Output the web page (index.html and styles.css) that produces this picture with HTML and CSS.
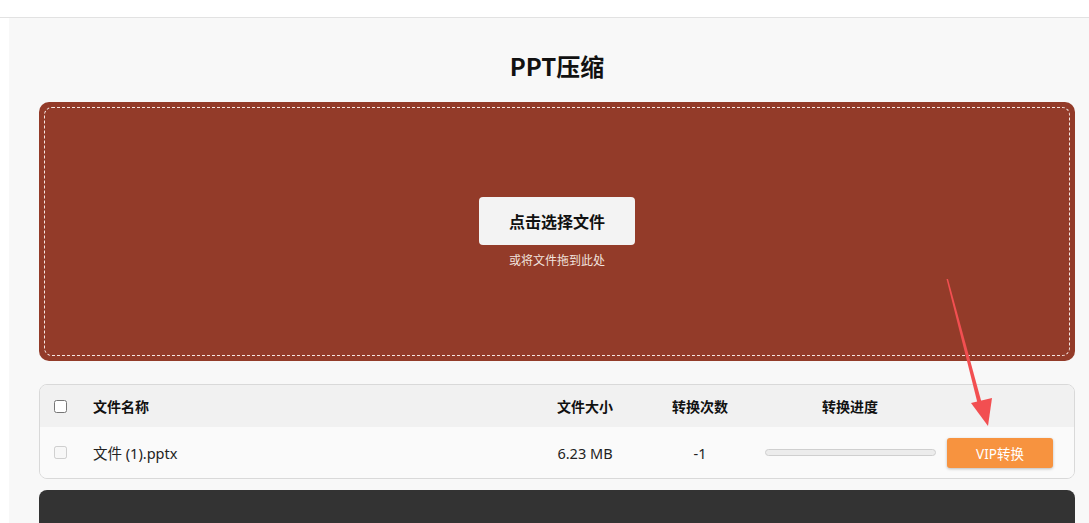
FILE: index.html
```html
<!DOCTYPE html>
<html lang="zh-CN">
<head>
<meta charset="utf-8">
<title>PPT压缩</title>
<link rel="stylesheet" href="styles.css">
</head>
<body>
<div class="topbar"></div>
<main class="page">
  <h1 class="title">PPT压缩</h1>
  <section class="dropzone">
    <div class="dropzone-inner">
      <button class="pick-btn">点击选择文件</button>
      <p class="hint">或将文件拖到此处</p>
    </div>
  </section>
  <section class="table">
    <div class="row head">
      <div class="cell check"><input type="checkbox"></div>
      <div class="cell name">文件名称</div>
      <div class="cell center">文件大小</div>
      <div class="cell center">转换次数</div>
      <div class="cell center">转换进度</div>
      <div class="cell"></div>
    </div>
    <div class="row body">
      <div class="cell check"><input type="checkbox" disabled></div>
      <div class="cell name">文件 (1).pptx</div>
      <div class="cell center">6.23 MB</div>
      <div class="cell center">-1</div>
      <div class="cell center"><div class="progress"></div></div>
      <div class="cell action"><button class="vip-btn">VIP转换</button></div>
    </div>
  </section>
  <section class="dark"></section>
</main>
<svg class="arrow" width="1089" height="523" viewBox="0 0 1089 523">
  <polygon points="946.5,279 948,279 982,404 978,405" fill="#f24f51"/>
  <polygon points="971,403 992,398 988,426" fill="#f24f51"/>
</svg>
</body>
</html>
```
FILE: styles.css
```css
* { box-sizing: border-box; }
html, body { margin: 0; padding: 0; background: #fff; overflow: hidden; height: 523px; }
body {
  font-family: "Noto Sans", "Noto Sans CJK SC", sans-serif;
  color: #222;
  position: relative;
}
.topbar {
  height: 18px;
  background: #fff;
  border-bottom: 1px solid #e2e2e2;
}
.page {
  margin-left: 9px;
  background: #f8f8f8;
  padding: 31px 14px 0 30px;
  height: 505px;
}
.title {
  margin: 0;
  text-align: center;
  font-size: 24px;
  line-height: 33px;
  font-weight: 700;
  color: #111;
  font-family: "Noto Sans CJK SC", sans-serif;
}
.dropzone {
  margin-top: 20px;
  height: 259px;
  background: #933b29;
  border-radius: 10px;
  padding: 5px;
}
.dropzone-inner {
  height: 100%;
  border: 1px dashed #f4e6e2;
  border-radius: 8px;
  display: flex;
  flex-direction: column;
  align-items: center;
  padding-top: 89px;
}
.pick-btn {
  width: 156px;
  height: 48px;
  border: none;
  border-radius: 4px;
  background: #f3f3f3;
  font-family: "Noto Sans CJK SC", sans-serif;
  font-size: 16px;
  font-weight: 700;
  color: #111;
}
.hint {
  margin: 6px 0 0;
  font-size: 12px;
  line-height: 17px;
  color: #f1e3df;
  font-family: "Noto Sans CJK SC", sans-serif;
}
.table {
  margin-top: 23px;
  border: 1px solid #d9d9d9;
  border-radius: 8px;
  overflow: hidden;
}
.row {
  display: grid;
  grid-template-columns: 53px 437px 110px 120px 180px 134px;
  align-items: center;
}
.head {
  height: 42px;
  background: #f1f1f1;
  font-weight: 700;
  font-size: 14px;
  color: #111;
  font-family: "Noto Sans CJK SC", sans-serif;
}
.body {
  height: 51px;
  background: #fafafa;
  font-size: 14.5px;
  color: #222;
}
.cell.check { padding-left: 14px; display: flex; align-items: center; }
.cell.check input { margin: 0; width: 13px; height: 13px; }
.cell.center { text-align: center; display: flex; justify-content: center; }
.progress {
  width: 171px;
  height: 7px;
  border: 1px solid #cfcfcf;
  border-radius: 4px;
  background: #ececec;
}
.cell.action { padding-left: 7px; }
.vip-btn {
  width: 106px;
  height: 30px;
  border: none;
  border-radius: 3px;
  background: #f7933f;
  color: #fff;
  font-size: 13.5px;
  font-family: "Noto Sans", "Noto Sans CJK SC", sans-serif;
  box-shadow: 0 1px 3px rgba(0,0,0,0.25);
}
.dark {
  margin-top: 11px;
  height: 33px;
  background: #333;
  border-radius: 8px 8px 0 0;
}
.arrow {
  position: absolute;
  left: 0;
  top: 0;
  pointer-events: none;
}
```
